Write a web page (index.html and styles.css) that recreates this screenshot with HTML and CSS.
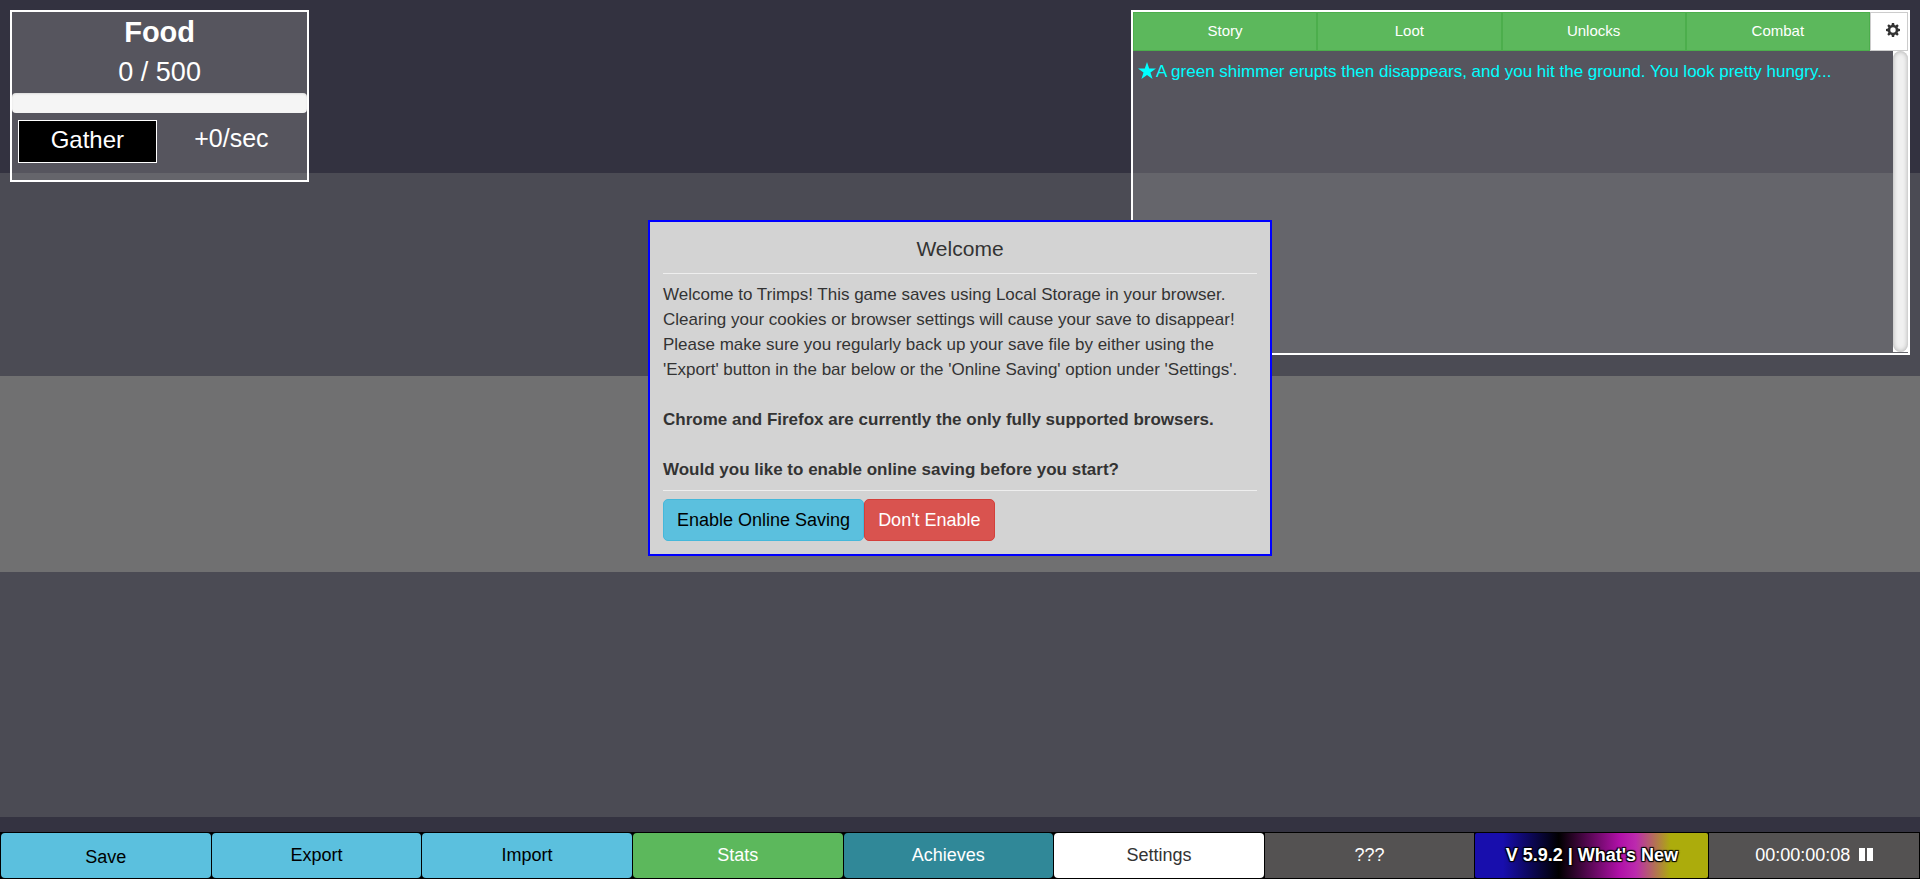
FILE: index.html
```
<!DOCTYPE html>
<html lang="en">
<head>
<meta charset="utf-8">
<title>Trimps</title>
<link rel="stylesheet" href="styles.css">
</head>
<body>
<main class="game">
  <section class="resource">
    <h2 class="resource-name">Food</h2>
    <p class="resource-count">0 / 500</p>
    <div class="progress"></div>
    <div class="resource-actions">
      <button class="gather" type="button">Gather</button>
      <span class="rate">+0/sec</span>
    </div>
  </section>
  <section class="log">
    <div class="log-tabs">
      <button class="tab" type="button">Story</button>
      <button class="tab" type="button">Loot</button>
      <button class="tab" type="button">Unlocks</button>
      <button class="tab" type="button">Combat</button>
      <button class="tab-config" type="button" aria-label="Message settings">
        <svg class="gear" viewBox="0 0 14 14"><path fill="#333" fill-rule="evenodd" d="M5.900 0h2.200l.4 1.900 1.100.5L11.200 1.300l1.500 1.500-1.100 1.600.5 1.100 1.900.4v2.200l-1.900.4-.5 1.100 1.100 1.600-1.500 1.500-1.600-1.100-1.100.5L8.100 14H5.900l-.4-1.900-1.100-.5-1.600 1.100-1.500-1.500 1.100-1.600-.5-1.100L0 8.100V5.900l1.900-.4.5-1.100L1.300 2.800l1.500-1.500 1.600 1.100 1.100-.5zM7 4.300a2.700 2.700 0 1 0 0 5.400 2.700 2.700 0 0 0 0-5.400z"/></svg>
      </button>
    </div>
    <div class="log-body">
      <p class="message"><svg class="star" viewBox="0 0 18 17"><path fill="currentColor" d="M9 0l2.200 6.400H18l-5.500 4.100 2.100 6.500L9 13l-5.600 4 2.100-6.500L0 6.400h6.800z"/></svg>A green shimmer erupts then disappears, and you hit the ground. You look pretty hungry...</p>
      <div class="scroll-track"></div>
    </div>
  </section>
</main>

<section class="dialog" role="dialog" aria-labelledby="dialog-title">
  <h1 class="dialog-title" id="dialog-title">Welcome</h1>
  <div class="dialog-text">Welcome to Trimps! This game saves using Local Storage in your browser. Clearing your cookies or browser settings will cause your save to disappear! Please make sure you regularly back up your save file by either using the 'Export' button in the bar below or the 'Online Saving' option under 'Settings'.<br><br><b>Chrome and Firefox are currently the only fully supported browsers.<br><br>Would you like to enable online saving before you start?</b></div>
  <div class="dialog-actions">
    <button class="action info" type="button">Enable Online Saving</button>
    <button class="action danger" type="button">Don't Enable</button>
  </div>
</section>

<nav class="bar">
  <button class="cell info save" type="button">Save</button>
  <button class="cell info" type="button">Export</button>
  <button class="cell info" type="button">Import</button>
  <button class="cell success" type="button">Stats</button>
  <button class="cell achieves" type="button">Achieves</button>
  <button class="cell plain" type="button">Settings</button>
  <button class="cell locked" type="button">???</button>
  <button class="cell version" type="button">V 5.9.2 | What's New</button>
  <button class="cell locked" type="button">00:00:00:08 <svg class="pause" viewBox="0 0 14 13"><path fill="#fff" d="M0 0h6v13H0zM8 0h6v13H8z"/></svg></button>
</nav>
</body>
</html>
```
FILE: styles.css
```
* { box-sizing: border-box; }

body {
  margin: 0;
  min-height: 100vh;
  display: flex;
  flex-direction: column;
  font-family: "Liberation Sans", Arial, sans-serif;
  color: #333;
  background: linear-gradient(#333240 0 173px, #4b4b54 173px 376px, #707071 376px 572px, #4b4b54 572px 817px, #343341 817px);
}

button {
  font-family: inherit;
  margin: 0;
  padding: 0;
  cursor: pointer;
}

h1, h2, p { margin: 0; font-weight: normal; }

.game {
  flex: 1;
  display: flex;
  justify-content: space-between;
  align-items: flex-start;
  padding: 10px;
}

.resource {
  width: 15.75%;
  border: 2px solid #fff;
  padding-bottom: 17px;
  background: rgba(153, 153, 153, 0.35);
  color: #fff;
  text-align: center;
}

.resource-name { font-size: 29px; line-height: 40px; font-weight: bold; }
.resource-count { font-size: 27px; line-height: 41px; }

.progress {
  height: 20px;
  border-radius: 4px;
  background: #f5f5f5;
  box-shadow: inset 0 1px 2px rgba(0, 0, 0, 0.1);
}

.resource-actions {
  display: grid;
  grid-template-columns: 1fr 1fr;
  align-items: start;
  padding: 7px 6px 0;
}

.gather {
  height: 43px;
  margin-right: 3px;
  padding-bottom: 4px;
  border: 1px solid #fff;
  background: #000;
  color: #fff;
  font-size: 24px;
}

.rate { font-size: 25px; line-height: 36px; padding-left: 2px; }

.log {
  width: 41%;
  height: 345px;
  display: flex;
  flex-direction: column;
  border: 2px solid #fff;
  background: rgba(153, 153, 153, 0.35);
}

.log-tabs { display: flex; height: 39px; }

.tab {
  flex: 1;
  padding-bottom: 2px;
  border: 1px solid #4cae4c;
  background: #5cb85c;
  color: #fff;
  font-size: 15px;
}

.tab-config {
  width: 38px;
  padding: 0 0 5px 8px;
  border: 1px solid #ccc;
  background: #fff;
}

.gear { width: 14px; height: 14px; vertical-align: middle; }

.log-body { flex: 1; display: flex; justify-content: space-between; }

.message {
  padding: 9px 0 0 5px;
  color: #00ffff;
  font-size: 17px;
  line-height: 24px;
}

.star { width: 18px; height: 17px; vertical-align: -2px; }

.scroll-track {
  width: 15px;
  margin-bottom: 1px;
  border-radius: 8px;
  background: #f0f0f0;
  box-shadow: inset 0 0 5px rgba(0, 0, 0, 0.3), 0 0 0 4px #fff;
  clip-path: inset(0);
}

.dialog {
  position: absolute;
  top: 220px;
  left: 50%;
  transform: translateX(-50%);
  width: 624px;
  border: 2px solid #00f;
  padding: 13px;
  background: #d3d3d3;
}

.dialog-title {
  padding-bottom: 10px;
  border-bottom: 1px solid #eee;
  font-size: 21px;
  line-height: 28px;
  text-align: center;
}

.dialog-text {
  padding: 8px 0;
  border-bottom: 1px solid #eee;
  font-size: 17px;
  line-height: 25px;
}

.dialog-actions { display: flex; padding-top: 8px; }

.action {
  height: 42px;
  padding: 0 13px;
  border: 1px solid;
  border-radius: 5px;
  font-size: 18px;
}

.info { background: #5bc0de; border-color: #46b8da; color: #000; }
.danger { background: #d9534f; border-color: #d43f3a; color: #fff; }

.bar {
  display: grid;
  grid-template-columns: repeat(7, 9fr) 10fr 9fr;
  gap: 1px;
  padding: 1px;
  background: #000;
}

.cell {
  height: 45px;
  border: 0;
  border-radius: 4px;
  font-size: 18px;
}

.save { padding-top: 3px; }
.success { background: #5cb85c; color: #fff; }
.achieves { background: #308898; color: #fff; }
.plain { background: #fff; color: #333; }
.locked { border-radius: 0; background: #545252; color: #fff; }

.version {
  border-radius: 2px;
  background: linear-gradient(90deg, #180ead 12%, #000 36%, #b010a8 62%, #bc2aae 69%, #acac0c 84%);
  color: #fff;
  font-weight: bold;
  text-shadow: -1px -1px 1px #000, 1px -1px 1px #000, -1px 1px 1px #000, 1px 1px 1px #000;
}

.pause { width: 14px; height: 13px; margin-left: 4px; }
```
